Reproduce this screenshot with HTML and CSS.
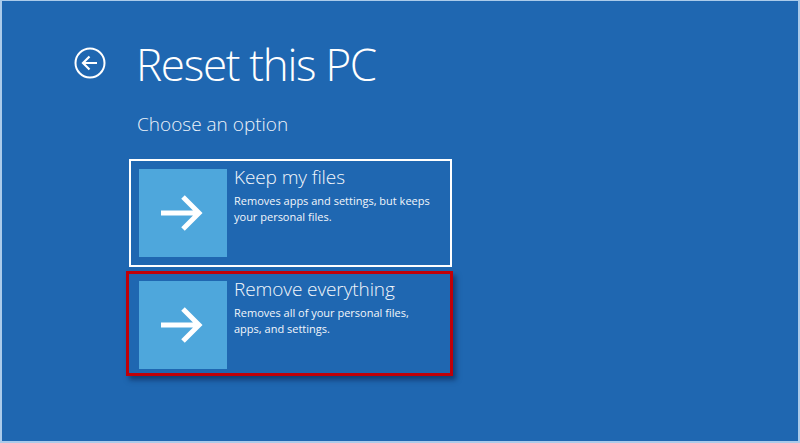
FILE: index.html
```html
<!DOCTYPE html>
<html>
<head>
<meta charset="utf-8">
<link rel="stylesheet" href="styles.css">
</head>
<body>
<div class="screen">
  <div class="header">
    <svg class="back" width="32" height="32" viewBox="0 0 32 32">
      <circle cx="16" cy="16" r="14.5" fill="none" stroke="#fff" stroke-width="2"/>
      <path d="M9 16 H23 M15.5 9.5 L9 16 L15.5 22.5" fill="none" stroke="#fff" stroke-width="2.2"/>
    </svg>
    <h1 class="title">Reset this PC</h1>
  </div>
  <div class="subtitle">Choose an option</div>
  <div class="options">
    <div class="card card-keep">
      <div class="tile">
        <svg width="46" height="36" viewBox="0 0 46 36">
          <path d="M2 18 H40 M24 2 L40 18 L24 34" fill="none" stroke="#fff" stroke-width="5"/>
        </svg>
      </div>
      <div class="text">
        <div class="name">Keep my files</div>
        <div class="desc">Removes apps and settings, but keeps<br>your personal files.</div>
      </div>
    </div>
    <div class="card card-remove">
      <div class="tile">
        <svg width="46" height="36" viewBox="0 0 46 36">
          <path d="M2 18 H40 M24 2 L40 18 L24 34" fill="none" stroke="#fff" stroke-width="5"/>
        </svg>
      </div>
      <div class="text">
        <div class="name">Remove everything</div>
        <div class="desc">Removes all of your personal files,<br>apps, and settings.</div>
      </div>
    </div>
  </div>
</div>
</body>
</html>
```
FILE: styles.css
```css
html, body {
  margin: 0;
  padding: 0;
  background: #abcbea;
}
body {
  width: 800px;
  height: 443px;
  overflow: hidden;
  font-family: "Open Sans", "Noto Sans", "DejaVu Sans", sans-serif;
  color: #fff;
}
.screen {
  margin: 1px 2px 0 2px;
  width: 796px;
  height: 440px;
  background: #1f67b1;
  box-sizing: border-box;
  padding-top: 38px;
}
.header {
  display: flex;
  align-items: center;
  height: 48px;
}
.back {
  margin-left: 72px;
  margin-right: 30px;
}
.title {
  margin: 0;
  font-weight: 300;
  font-size: 44px;
  line-height: 48px;
  letter-spacing: -1.3px;
  position: relative;
  top: 1px;
}
.subtitle {
  margin: 24px 0 0 135px;
  font-size: 19px;
  font-weight: 300;
  line-height: 26px;
  color: #eef3fa;
}
.options {
  margin: 22px 0 0 127px;
  display: flex;
  flex-direction: column;
  gap: 4px;
}
.card {
  display: flex;
  align-items: flex-start;
  box-sizing: border-box;
}
.card-keep {
  width: 323px;
  border: 2px solid #fff;
  padding: 8px;
}
.card-remove {
  width: 327px;
  margin-left: -3px;
  border: 3px solid #c00008;
  padding: 7px 10px 4px 10px;
  box-shadow: 3px 4px 5px rgba(10, 30, 70, 0.55);
}
.tile {
  width: 88px;
  height: 88px;
  flex: none;
  background: #4ea7dc;
  display: flex;
  align-items: center;
  justify-content: center;
}
.tile svg {
  margin-left: -2px;
}
.text {
  margin-left: 7px;
  margin-top: -5px;
}
.name {
  font-size: 19px;
  font-weight: 300;
  line-height: 26px;
  color: #f2f6fb;
  letter-spacing: -0.1px;
}
.desc {
  font-size: 11px;
  line-height: 16px;
  color: #f2f6fb;
  margin-top: 3px;
}
```
